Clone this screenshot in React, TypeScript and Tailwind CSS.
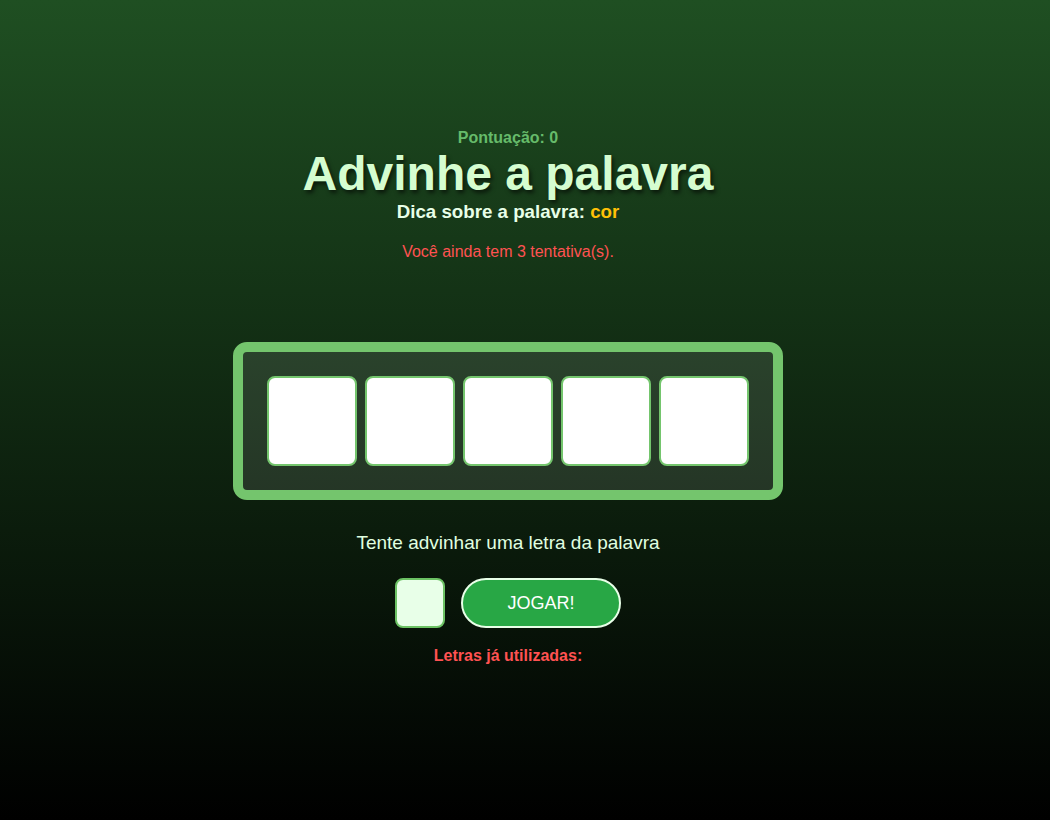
import { useState } from 'react';

const WORD_LENGTH = 5;

export default function App() {
  const [letter, setLetter] = useState('');

  return (
    <div className="h-[820px] w-full overflow-hidden bg-[linear-gradient(to_bottom,#1f4f22,#000000)] font-['Liberation_Sans',Arial,sans-serif]">
      <div className="flex flex-col items-center pr-[34px] pt-[129px]">
        <p className="text-[16px] leading-[18px] font-bold text-[#66bb6a]">Pontuação: 0</p>
        <h1 className="text-[48px] leading-[54px] font-bold text-[#d5fdd0] [text-shadow:2px_3px_4px_rgba(0,0,0,0.6)]">
          Advinhe a palavra
        </h1>
        <h3 className="text-[18.72px] leading-[22px] font-bold text-[#e8ffe8]">
          Dica sobre a palavra: <span className="text-[#ffc107]">cor</span>
        </h3>
        <p className="mt-[20px] text-[16px] leading-[18px] text-[#ff5252]">Você ainda tem 3 tentativa(s).</p>

        <div className="mt-[81px] flex gap-2 rounded-[14px] border-[10px] border-[#74c56d] bg-white/10 p-6">
          {Array.from({ length: WORD_LENGTH }).map((_, i) => (
            <div key={i} className="h-[90px] w-[90px] rounded-lg border-2 border-[#74c56d] bg-white" />
          ))}
        </div>

        <p className="mt-[32px] text-[19px] leading-[22px] text-[#e0ffe0]">Tente advinhar uma letra da palavra</p>

        <div className="mt-[24px] flex items-center gap-4">
          <input
            value={letter}
            maxLength={1}
            onChange={(e) => setLetter(e.target.value)}
            className="h-[50px] w-[50px] rounded-lg border-2 border-[#6cc264] bg-[#e8ffe8] text-center text-xl outline-none"
          />
          <button className="h-[50px] w-[160px] rounded-full border-2 border-[#e8ffe8] bg-[#28a745] text-[18px] text-white">
            JOGAR!
          </button>
        </div>

        <p className="mt-[19px] text-[16px] leading-[18px] font-bold text-[#ff5252]">Letras já utilizadas:</p>
      </div>
    </div>
  );
}
